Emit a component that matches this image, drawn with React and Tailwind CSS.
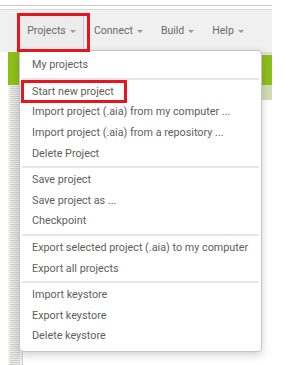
const groups = [
  ["My projects"],
  [
    "Start new project",
    "Import project (.aia) from my computer ...",
    "Import project (.aia) from a repository ...",
    "Delete Project",
  ],
  ["Save project", "Save project as ...", "Checkpoint"],
  ["Export selected project (.aia) to my computer", "Export all projects"],
  ["Import keystore", "Export keystore", "Delete keystore"],
];

function Caret() {
  return <span className="ml-[4px] inline-block border-x-[3px] border-t-[3px] border-x-transparent border-t-[#999] align-middle" />;
}

function NavItem({ label }) {
  return (
    <div className="flex h-full items-center px-[9px] text-[#6a6a6a]">
      {label}
      <Caret />
    </div>
  );
}

export default function App() {
  return (
    <div className="relative h-[365px] w-[289px] overflow-hidden bg-white text-[10.5px]" style={{ fontFamily: "Roboto, 'Liberation Sans', sans-serif" }}>
      <div className="mt-[5px] h-px w-[272px] bg-[#c8c8c8]" />
      <div className="mt-[3px] flex h-[43px] w-[272px] items-center border-t border-[#d8d8d8] bg-[#f0f0f0] pl-[20px]">
        <div className="flex h-[34px] w-[64px] items-center justify-center border-r border-[#b8c8e0] bg-[#ececec] text-[#6a6a6a]">
          Projects
          <Caret />
        </div>
        <div className="ml-[1px] flex h-full items-center">
          <NavItem label="Connect" />
          <NavItem label="Build" />
          <NavItem label="Help" />
        </div>
      </div>

      <div className="flex w-[272px]">
        <div className="w-[8px]" />
        <div className="flex w-[14px] flex-col">
          <div className="h-[33px] bg-[#8dbf1a]" />
          <div className="h-[280px] border-x-[2px] border-[#eef0ea] bg-[repeating-linear-gradient(0deg,#d0d0d0_0px,#d0d0d0_1px,#ececec_1px,#ececec_2px)]" />
        </div>
        <div className="flex flex-1 flex-col">
          <div className="h-[3px] bg-[#dcdcdc]" />
          <div className="h-[30px] bg-[#8dbf1a]" />
          <div className="h-[15px] bg-[#cfdcb4]" />
          <div className="flex-1 border-l border-[#cfcfcf] bg-white" />
        </div>
      </div>

      <div className="absolute left-[19px] top-[50px] w-[243px] rounded-[4px] border border-[#c4c4c4] bg-white py-[4px] text-[10.8px] shadow-[0_3px_8px_rgba(0,0,0,0.18)]">
        {groups.map((g, gi) => (
          <div key={gi}>
            {gi > 0 && <div className="mx-[2px] my-[2px] h-[2px] bg-[#e6e6e6]" />}
            {g.map((t) => (
              <div key={t} className="flex h-[20.6px] items-center whitespace-nowrap pl-[12px] text-[#5e5e5e]">
                {t}
              </div>
            ))}
          </div>
        ))}
      </div>

      <div className="absolute left-[17px] top-[13px] h-[39px] w-[73px] border-[3px] border-[#e8141e]" />
      <div className="absolute left-[21px] top-[80px] h-[23px] w-[106px] border-[3px] border-[#e8141e]" />
    </div>
  );
}
